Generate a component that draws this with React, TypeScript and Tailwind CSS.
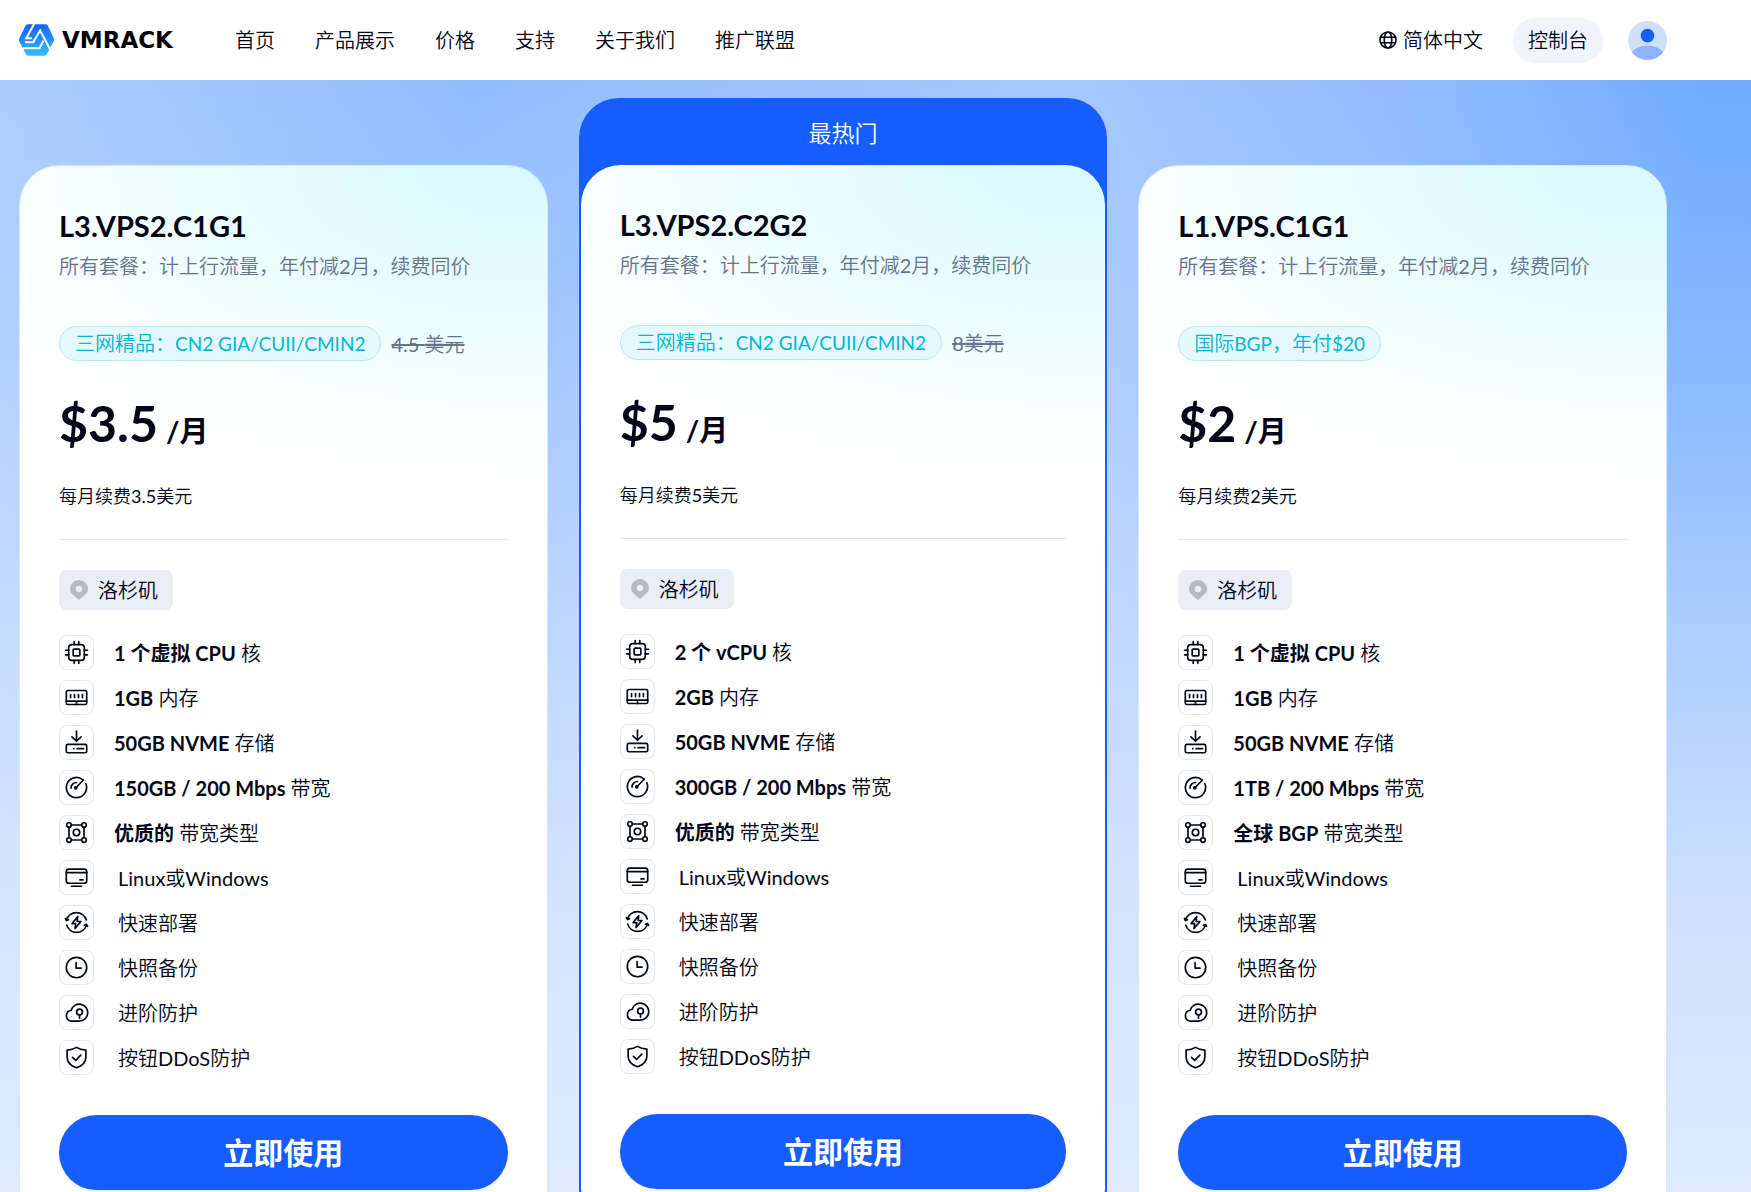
import type { ReactNode } from 'react';

const NAV = ['首页', '产品展示', '价格', '支持', '关于我们', '推广联盟'];

type Plan = {
  name: string;
  tag: string;
  oldPrice?: string;
  price: string;
  renew: string;
  hot?: boolean;
  specs: { bold?: string; text: string }[];
};

const COMMON = [
  { text: 'Linux或Windows' },
  { text: '快速部署' },
  { text: '快照备份' },
  { text: '进阶防护' },
  { text: '按钮DDoS防护' },
];

const PLANS: Plan[] = [
  {
    name: 'L3.VPS2.C1G1',
    tag: '三网精品：CN2 GIA/CUII/CMIN2',
    oldPrice: '4.5 美元',
    price: '$3.5',
    renew: '每月续费3.5美元',
    specs: [
      { bold: '1 个虚拟 CPU', text: '核' },
      { bold: '1GB', text: '内存' },
      { bold: '50GB NVME', text: '存储' },
      { bold: '150GB / 200 Mbps', text: '带宽' },
      { bold: '优质的', text: '带宽类型' },
      ...COMMON,
    ],
  },
  {
    name: 'L3.VPS2.C2G2',
    tag: '三网精品：CN2 GIA/CUII/CMIN2',
    oldPrice: '8美元',
    price: '$5',
    renew: '每月续费5美元',
    hot: true,
    specs: [
      { bold: '2 个 vCPU', text: '核' },
      { bold: '2GB', text: '内存' },
      { bold: '50GB NVME', text: '存储' },
      { bold: '300GB / 200 Mbps', text: '带宽' },
      { bold: '优质的', text: '带宽类型' },
      ...COMMON,
    ],
  },
  {
    name: 'L1.VPS.C1G1',
    tag: '国际BGP，年付$20',
    price: '$2',
    renew: '每月续费2美元',
    specs: [
      { bold: '1 个虚拟 CPU', text: '核' },
      { bold: '1GB', text: '内存' },
      { bold: '50GB NVME', text: '存储' },
      { bold: '1TB / 200 Mbps', text: '带宽' },
      { bold: '全球 BGP', text: '带宽类型' },
      ...COMMON,
    ],
  },
];

const ICONS: ReactNode[] = [
  // cpu
  <>
    <rect x="4.5" y="4.5" width="15" height="15" rx="3" />
    <rect x="8.8" y="8.8" width="6.4" height="6.4" rx="0.8" />
    <path d="M9.8 1.5v3M14.2 1.5v3M9.8 19.5v3M14.2 19.5v3M1.5 9.8h3M1.5 14.2h3M19.5 9.8h3M19.5 14.2h3" />
  </>,
  // memory
  <>
    <rect x="2.2" y="5.3" width="19.6" height="13.4" rx="1.5" />
    <path d="M2.2 15.4h19.6M12 15.4v3.3M6.3 9.2v3M10.1 9.2v3M13.9 9.2v3M17.7 9.2v3" />
  </>,
  // disk
  <>
    <path d="M12 1v9.7M7.6 6.6l4.4 4.2 4.4-4.2" />
    <rect x="2.2" y="13.8" width="19.6" height="8" rx="1.5" />
    <path d="M9.3 17.8h.2M12.6 17.8h6.2" />
  </>,
  // speed
  <>
    <path d="M18.2 4.6A9.7 9.7 0 1 0 20.9 8.2" />
    <path d="M11.4 12.2l7-7.2M6.8 12.6A5.2 5.2 0 0 1 12 7.2" />
    <circle cx="11.3" cy="12.3" r="1" fill="currentColor" />
  </>,
  // network
  <>
    <circle cx="4.8" cy="4.8" r="2.2" />
    <circle cx="19.2" cy="4.8" r="2.2" />
    <circle cx="4.8" cy="19.2" r="2.2" />
    <circle cx="19.2" cy="19.2" r="2.2" />
    <circle cx="12" cy="12" r="3.1" />
    <path d="M7 4.8h10M7 19.2h10M4.8 7v10M19.2 7v10" />
  </>,
  // os
  <>
    <rect x="2.2" y="3.9" width="19.6" height="13.6" rx="2.4" />
    <path d="M2.2 7.3h19.6M15.3 14.2h3M7.2 20.4h9.6" />
  </>,
  // deploy
  <>
    <path d="M2.4 9.6a9.9 9.9 0 0 1 19 0M21.6 14.4a9.9 9.9 0 0 1-19 0" />
    <path d="M1.4 8.2l1 1.9 1.9-.8M22.6 15.8l-1-1.9-1.9.8" />
    <path d="M13.2 6.2L7.8 13h3.4l-.6 4.8 5.6-6.8h-3.6z" />
  </>,
  // snapshot
  <>
    <circle cx="12" cy="12" r="9.8" />
    <path d="M11.6 7.2v5.4h4.8" />
  </>,
  // cloud protection
  <>
    <path d="M6.4 20.2H14.7a8.1 8.1 0 1 0-7.8-10.4A5.3 5.3 0 0 0 6.4 20.2z" />
    <circle cx="14.9" cy="11.6" r="2.8" />
    <path d="M14.9 14.4v3.2" />
  </>,
  // shield
  <>
    <path d="M12 2.3c2.6 1.7 5.5 2.4 9 2.6v6.6c0 5.4-3.6 8.6-9 10.4-5.4-1.8-9-5-9-10.4V4.9c3.5-.2 6.4-.9 9-2.6z" />
    <path d="M8.2 11.8l3 2.9 4.9-5" />
  </>,
];

// Chinese glyphs are set light, Latin runs and digits regular
function Mixed({ children, latin = 'font-normal' }: { children: string; latin?: string }) {
  return (
    <>
      {children.split(/([\x20-\x7e]+)/).map((part, i) => (
        <span key={i} className={i % 2 ? latin : 'font-[350]'}>{part}</span>
      ))}
    </>
  );
}

function Logo() {
  return (
    <a href="#" className="flex items-center gap-2">
      <svg viewBox="0 0 106 96" className="h-8 w-[35px]" aria-hidden="true">
        <defs>
          <linearGradient id="logo" x1="0.4" y1="0" x2="0.5" y2="1">
            <stop offset="0" stopColor="#155dfc" />
            <stop offset="1" stopColor="#31c0ff" />
          </linearGradient>
        </defs>
        <path d="M27 0h53q5 0 7 4l18 38q2 5 0 10L84 91q-2 5-7 5H29q-5 0-7-4L1 54q-2-6 0-11L20 5q2-5 7-5z" fill="url(#logo)" />
        <g stroke="#fff" strokeWidth="6" fill="none">
          <path d="M47 -3L22 43H39" />
          <path d="M18 55H43L64 19L94 76" />
          <path d="M10 73H62L74 50" />
        </g>
      </svg>
      <span className="font-['DejaVu_Sans'] text-[23px] leading-8 font-bold text-black">VMRACK</span>
    </a>
  );
}

function Header() {
  return (
    <header className="flex h-20 items-center bg-white pr-[84px] pl-[19px] text-[20px] text-[#020617]">
      <Logo />
      <nav className="ml-[62px] flex gap-10 font-[350]">
        {NAV.map((item) => (
          <a key={item} href="#">{item}</a>
        ))}
      </nav>
      <div className="ml-auto flex items-center">
        <button className="flex items-center gap-1.5 font-[350]">
          <svg viewBox="0 0 18 18" className="size-[18px]" fill="none" stroke="currentColor" strokeWidth="1.6" aria-hidden="true">
            <circle cx="9" cy="9" r="8" />
            <ellipse cx="9" cy="9" rx="3.8" ry="8" />
            <path d="M1.6 6.2h14.8M1.6 11.8h14.8" />
          </svg>
          简体中文
        </button>
        <button className="ml-[30px] h-[45px] rounded-full bg-[#f1f5f9] px-[15px] font-[350]">控制台</button>
        <button className="ml-[25px]" aria-label="账户">
          <svg viewBox="0 0 40 40" className="size-[39px]" aria-hidden="true">
            <clipPath id="avatar"><circle cx="20" cy="20" r="20" /></clipPath>
            <g clipPath="url(#avatar)">
              <rect width="40" height="40" fill="#d0dffe" />
              <circle cx="20" cy="15" r="7" fill="#155dfc" />
              <circle cx="20" cy="49" r="24" fill="#8fb2fe" />
            </g>
          </svg>
        </button>
      </div>
    </header>
  );
}

function PlanBody({ plan }: { plan: Plan }) {
  return (
    <>
      <h2 className="text-[29px] leading-10 font-bold">{plan.name}</h2>
      <p className="text-[20px] leading-10 text-[#64748b]">
        <Mixed>所有套餐：计上行流量，年付减2月，续费同价</Mixed>
      </p>
      <div className="mt-10 flex items-center gap-2.5 text-[20px]">
        <span className="h-[35px] rounded-full border border-[#b2ebf2] bg-[#e6f8fb] px-[15px] leading-[33px] whitespace-nowrap text-[#00b8d4]">
          <Mixed latin="text-[19px] font-normal">{plan.tag}</Mixed>
        </span>
        {plan.oldPrice && (
          <del className="whitespace-nowrap text-[#64748b]"><Mixed>{plan.oldPrice}</Mixed></del>
        )}
      </div>
      <p className="mt-8 text-[50px] leading-[60px] font-bold">
        {plan.price}
        <span className="ml-2 text-[29px] leading-none">/月</span>
      </p>
      <p className="mt-7 text-[18px] leading-[30px]"><Mixed>{plan.renew}</Mixed></p>
      <hr className="mt-7 border-[#e2e8f0]" />
      <div className="mt-[30px] flex h-10 w-fit items-center gap-2.5 rounded-lg bg-[#e9edf6] pr-[15px] pl-[11px] text-[20px] font-[350]">
        <svg viewBox="0 0 18 20" className="h-5 w-[18px]" fill="#b4bac7" fillRule="evenodd" aria-hidden="true">
          <path d="M9 0a9 9 0 0 1 9 9c0 3.500-2 5-9 11C2 14 0 12.500 0 9a9 9 0 0 1 9-9zm0 5.800a3.200 3.200 0 1 0 0 6.400 3.200 3.200 0 0 0 0-6.400z" />
        </svg>
        洛杉矶
      </div>
      <ul className="mt-[25px] flex flex-col gap-2.5 text-[20px]">
        {plan.specs.map((spec, i) => (
          <li key={i} className="flex items-center gap-5">
            <span className="flex size-[35px] items-center justify-center rounded-lg border border-[#e2e8f0] bg-white">
              <svg viewBox="0 0 24 24" className="size-[25px]" fill="none" stroke="currentColor" strokeWidth="1.6" strokeLinecap="round" strokeLinejoin="round" aria-hidden="true">
                {ICONS[i]}
              </svg>
            </span>
            {spec.bold ? (
              <span><b className="font-bold">{spec.bold}</b> <Mixed>{spec.text}</Mixed></span>
            ) : (
              <span className="pl-1"><Mixed>{spec.text}</Mixed></span>
            )}
          </li>
        ))}
      </ul>
      <button className="mt-10 h-[75px] w-full rounded-full bg-[#155dfc] text-[30px] font-bold text-white shadow-sm">
        立即使用
      </button>
    </>
  );
}

const CARD_BG = 'bg-[radial-gradient(ellipse_600px_310px_at_94%_0,#d8fafe,#ffffff)]';

export default function App() {
  return (
    <div className="min-h-screen overflow-hidden font-[Lato,'Noto_Sans_CJK_SC',sans-serif] text-[#020617]">
      <Header />
      <main className="bg-[linear-gradient(180deg,#dfeaff00_0px,#dfeaff30_270px,#dfeaff80_520px,#dfeaffd6_820px,#dfeaff_1112px),linear-gradient(100deg,#abcdff_0%,#91bdff_24%,#a5c8ff_54%,#92bcff_71%,#70acff_87%)] pt-[18px] pr-[84px] pb-20 pl-[19px]">
        <div className="grid grid-cols-3 gap-[31px]">
          {PLANS.map((plan) =>
            plan.hot ? (
              <section key={plan.name} className="rounded-[40px] bg-[#155dfc] px-0.5 pb-0.5">
                <div className="h-[67px] text-center text-[23px] leading-[70px] text-white"><Mixed>最热门</Mixed></div>
                <div className={`rounded-[40px] px-[39px] py-10 ${CARD_BG}`}>
                  <PlanBody plan={plan} />
                </div>
              </section>
            ) : (
              <section key={plan.name} className={`mt-[67px] rounded-[40px] border border-[#d5e6ff] px-[39px] py-10 ${CARD_BG}`}>
                <PlanBody plan={plan} />
              </section>
            ),
          )}
        </div>
      </main>
    </div>
  );
}
